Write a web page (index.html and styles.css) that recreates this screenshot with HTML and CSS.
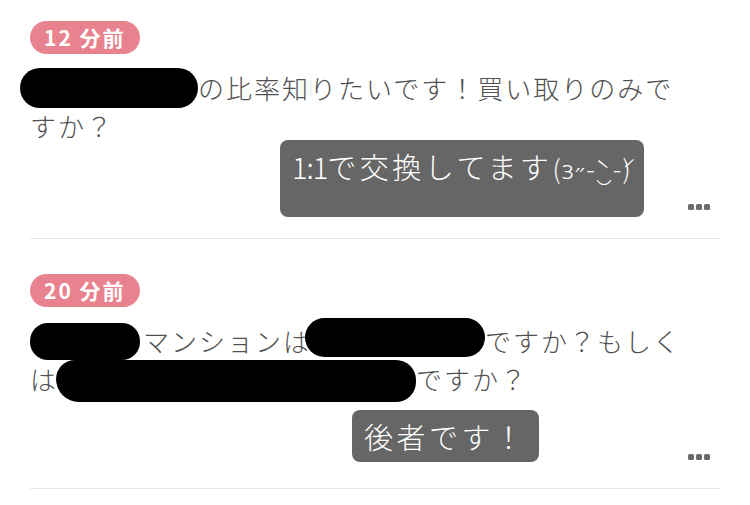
FILE: index.html
```html
<!DOCTYPE html>
<html lang="ja">
<head>
<meta charset="utf-8">
<title>回答一覧</title>
<link rel="stylesheet" href="styles.css">
</head>
<body>
<main class="feed">
  <article class="post post--first">
    <span class="badge">12 分前</span>
    <p class="question"><span class="redact redact--a"></span>の比率知りたいです！買い取りのみですか？</p>
    <div class="reply reply--one">
      <p class="bubble bubble--tall"><span class="num">1:1</span>で交換してます<span class="kaomoji">(ɜ˶-̀‿-́)</span></p>
    </div>
    <div class="more"><span></span><span></span><span></span></div>
  </article>
  <article class="post post--next">
    <span class="badge">20 分前</span>
    <p class="question"><span class="redact redact--b"></span>マンションは<span class="redact redact--c"></span>ですか？もしくは<span class="redact redact--d"></span>ですか？</p>
    <div class="reply reply--two">
      <p class="bubble">後者です！</p>
    </div>
    <div class="more more--low"><span></span><span></span><span></span></div>
  </article>
</main>
</body>
</html>
```

FILE: styles.css
```css
* { box-sizing: border-box; }

html, body {
  margin: 0;
  padding: 0;
  background: #ffffff;
}

body {
  font-family: "Noto Sans CJK JP", "Noto Sans", sans-serif;
  color: #505050;
}

.feed {
  padding: 0 30px;
}

.post {
  display: flex;
  flex-direction: column;
  align-items: flex-start;
  border-bottom: 1px solid #e6e6e6;
  padding-bottom: 28px;
}

.post--first { padding-top: 21px; }
.post--next { padding-top: 35px; }

.badge {
  display: inline-block;
  height: 33px;
  line-height: 33px;
  padding: 0 14px;
  border-radius: 17px;
  background: #e9828f;
  color: #ffffff;
  font-size: 21px;
  font-weight: 700;
  letter-spacing: 2px;
}

.question {
  margin: 15px 0 0;
  width: 660px;
  font-size: 26px;
  line-height: 38px;
  letter-spacing: 2px;
  font-weight: 300;
}

.redact {
  display: inline-block;
  vertical-align: top;
  background: #000000;
  border-radius: 20px;
}

.redact--a {
  width: 178px;
  height: 40px;
  margin: -1px 0 -1px -10px;
}

.redact--b {
  width: 110px;
  height: 37px;
  margin: 1px 3px 0 0;
  border-radius: 18px;
}

.redact--c {
  width: 180px;
  height: 39px;
  margin: -4px 0 3px -6px;
}

.redact--d {
  width: 360px;
  height: 42px;
  margin: 0 0 -4px -2px;
  border-radius: 20px 21px 21px 24px;
}

.reply--one { margin: -5px 0 0 250px; }
.reply--two { margin: 12px 0 0 322px; }

.bubble {
  margin: 0;
  height: 52px;
  padding: 7px 12px;
  background: #666666;
  color: #ffffff;
  border-radius: 8px;
  font-size: 29px;
  line-height: 38px;
  letter-spacing: 3.5px;
  font-weight: 300;
  white-space: nowrap;
  overflow: hidden;
}

.bubble--tall { height: 77px; }

.num { letter-spacing: -1px; }

.kaomoji {
  font-size: 26px;
  line-height: 0;
  letter-spacing: 1px;
}

.more {
  align-self: flex-end;
  display: flex;
  gap: 2px;
  margin: -13px 10px 0 0;
}

.more--low { margin-top: -8px; }

.more span {
  width: 6px;
  height: 6px;
  border-radius: 1.5px;
  background: #6b6b6b;
}
```
